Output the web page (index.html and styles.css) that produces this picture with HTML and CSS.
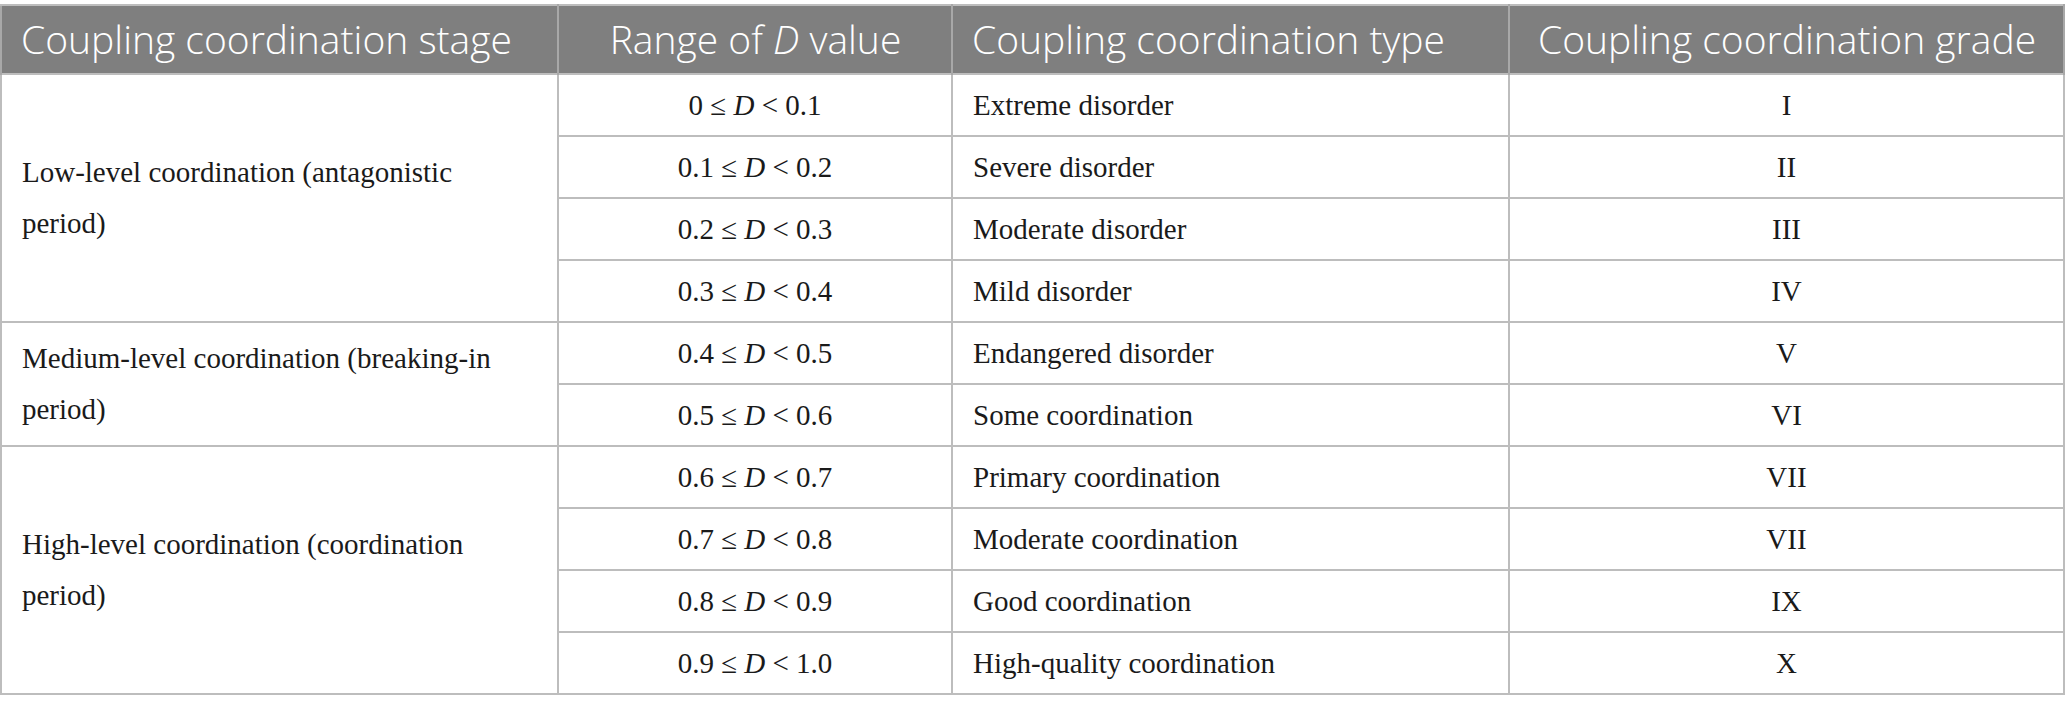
FILE: index.html
```html
<!DOCTYPE html>
<html lang="en">
  <head>
    <title>Coupling coordination</title>
    <meta charset="utf-8" />
    <link rel="stylesheet" href="styles.css">
  </head>
  <body>
    <div id="container">
      <table class="grades">
        <thead>
          <tr>
            <th class="left">Coupling coordination stage</th>
            <th>Range of <i>D</i> value</th>
            <th class="left">Coupling coordination type</th>
            <th>Coupling coordination grade</th>
          </tr>
        </thead>
        <tbody>
          <tr>
            <td class="stage" rowspan="4">Low-level coordination (antagonistic<br />period)</td>
            <td class="mid">0 &le; <i>D</i> &lt; 0.1</td>
            <td>Extreme disorder</td>
            <td class="mid">I</td>
          </tr>
          <tr>
            <td class="mid">0.1 &le; <i>D</i> &lt; 0.2</td>
            <td>Severe disorder</td>
            <td class="mid">II</td>
          </tr>
          <tr>
            <td class="mid">0.2 &le; <i>D</i> &lt; 0.3</td>
            <td>Moderate disorder</td>
            <td class="mid">III</td>
          </tr>
          <tr>
            <td class="mid">0.3 &le; <i>D</i> &lt; 0.4</td>
            <td>Mild disorder</td>
            <td class="mid">IV</td>
          </tr>
          <tr>
            <td class="stage" rowspan="2">Medium-level coordination (breaking-in<br />period)</td>
            <td class="mid">0.4 &le; <i>D</i> &lt; 0.5</td>
            <td>Endangered disorder</td>
            <td class="mid">V</td>
          </tr>
          <tr>
            <td class="mid">0.5 &le; <i>D</i> &lt; 0.6</td>
            <td>Some coordination</td>
            <td class="mid">VI</td>
          </tr>
          <tr>
            <td class="stage" rowspan="4">High-level coordination (coordination<br />period)</td>
            <td class="mid">0.6 &le; <i>D</i> &lt; 0.7</td>
            <td>Primary coordination</td>
            <td class="mid">VII</td>
          </tr>
          <tr>
            <td class="mid">0.7 &le; <i>D</i> &lt; 0.8</td>
            <td>Moderate coordination</td>
            <td class="mid">VII</td>
          </tr>
          <tr>
            <td class="mid">0.8 &le; <i>D</i> &lt; 0.9</td>
            <td>Good coordination</td>
            <td class="mid">IX</td>
          </tr>
          <tr>
            <td class="mid">0.9 &le; <i>D</i> &lt; 1.0</td>
            <td>High-quality coordination</td>
            <td class="mid">X</td>
          </tr>
        </tbody>
      </table>
    </div>
  </body>
</html>
```

FILE: styles.css
```css
body {
  margin: 0;
  background: #ffffff;
}
#container {
  padding: 4px 0 0 0;
}

.grades {
  width: 2065px;
  border-collapse: collapse;
  table-layout: fixed;
  border: 2px solid #bdbdbd;
}
.grades th,
.grades td {
  box-sizing: border-box; /* widths include padding */
}
.grades th {
  height: 69px;
  padding: 0 18px 2px 19px;
  background-color: #7f7f7f;
  color: #ffffff;
  font-family: "Open Sans", sans-serif;
  font-weight: 300;
  font-size: 39px;
  text-align: center;
  white-space: nowrap;
  border: 2px solid #a8a8a8;
  border-top: 2px solid #bdbdbd;
  border-bottom: none;
}
.grades th.left {
  text-align: left;
}
.grades th:nth-child(1) { width: 557px; }
.grades th:nth-child(2) { width: 394px; }
.grades th:nth-child(3) { width: 557px; }

.grades td {
  height: 62px;
  padding: 0 20px;
  font-family: "Liberation Serif", serif;
  font-size: 29px;
  color: #1a1a1a;
  border: 2px solid #bdbdbd;
  vertical-align: middle;
}
.grades td.mid {
  text-align: center; /* range and grade columns */
}
.grades td.stage {
  padding-left: 20px;
  line-height: 51px;
}
```
